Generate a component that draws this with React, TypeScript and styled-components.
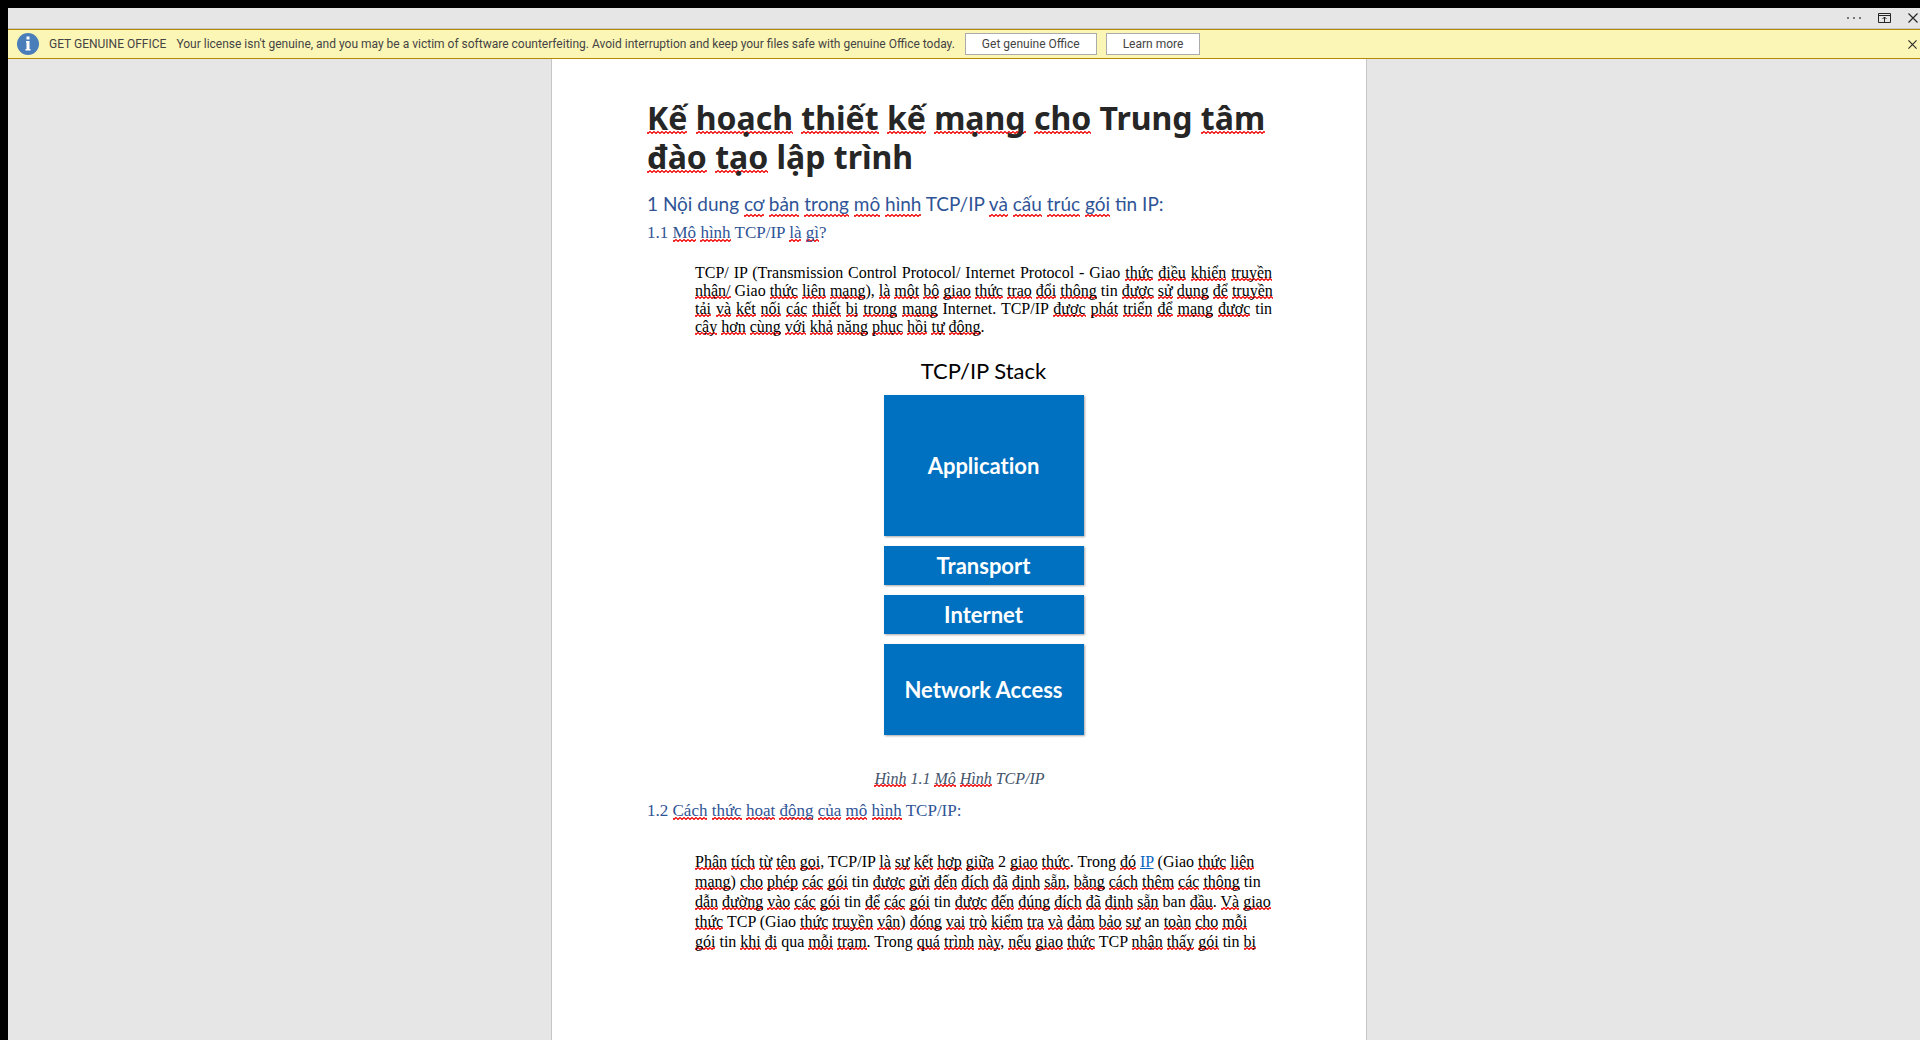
import React from "react";
import styled, { createGlobalStyle } from "styled-components";

const serif = '"Liberation Serif", "Times New Roman", serif';
const humanist = "Lato, Calibri, sans-serif";
const display = '"Noto Sans", Tahoma, sans-serif';
const ui = 'Roboto, "Segoe UI", sans-serif';

const squiggle =
  "url(\"data:image/svg+xml,%3Csvg xmlns='http://www.w3.org/2000/svg' width='4' height='3'%3E%3Cpath d='M-1 .5L1 2.5L3 .5L5 2.5' fill='none' stroke='%23f00000' stroke-width='1.2'/%3E%3C/svg%3E\")";

const GlobalStyle = createGlobalStyle`
  *, *::before, *::after { box-sizing: border-box; }
  body { margin: 0; background: #000; }
`;

const Window = styled.div`
  display: flex;
  flex-direction: column;
  height: 100vh;
  padding: 8px 0 0 8px;
  background: #000;
  overflow: hidden;
`;

const TitleBar = styled.header`
  display: flex;
  flex: none;
  align-items: center;
  justify-content: flex-end;
  gap: 17px;
  height: 21px;
  padding-right: 2px;
  background: #e6e6e6;
  border-bottom: 1px solid #c6c6c6;
`;

const IconButton = styled.button`
  display: flex;
  padding: 0;
  border: 0;
  background: none;
  color: #262626;
`;

const Banner = styled.section`
  display: flex;
  flex: none;
  align-items: center;
  gap: 10px;
  height: 30px;
  padding: 0 3px 0 9px;
  background: #fcf6b6;
  border: solid #b38a00;
  border-width: 1px 0;
  color: #444;
  font: 12px/20px ${ui};
  white-space: nowrap;
`;

const BannerLabel = styled.strong`
  font-weight: 400;
`;

const BannerActions = styled.div`
  display: flex;
  flex: 1;
  gap: 9px;
`;

const BannerButton = styled.button`
  height: 22px;
  padding: 0 16px;
  border: 1px solid #ababab;
  background: #fff;
  color: #444;
  font: inherit;
`;

const Workspace = styled.main`
  display: flex;
  flex: 1;
  justify-content: center;
  min-height: 0;
  padding-right: 10px;
  background: #e6e6e6;
`;

const Page = styled.article`
  width: 816px;
  padding: 39px 94px 0 95px;
  border: solid #c6c6c6;
  border-width: 0 1px;
  background: #fff;
  color: #000;
  font-family: ${serif};
`;

const Misspelled = styled.span`
  background: ${squiggle} left bottom / 4px 3px repeat-x;
`;

const Title = styled.h1`
  margin: 0;
  color: #262626;
  font: 700 32px/39px ${display};
  white-space: nowrap;

  ${Misspelled} {
    background-position: left bottom 5px;
  }
`;

const Heading = styled.h2`
  margin: 14px 0 1px;
  color: #2f5496;
  font: 400 19px/28px ${humanist};
  white-space: nowrap;

  ${Misspelled} {
    padding-bottom: 2px;
  }
`;

const Subheading = styled.h3`
  margin: 0;
  color: #2f5496;
  font: 400 17px/28px ${serif};
`;

const Body = styled.p<{ $justify?: boolean; $leading: number; $gap: number }>`
  margin: ${(p) => p.$gap}px 0 0 48px;
  font-size: 16px;
  line-height: ${(p) => p.$leading}px;
  white-space: nowrap;
  text-align-last: ${(p) => (p.$justify ? "justify" : "left")};
`;

const Line = styled.span`
  display: block;

  &:last-child {
    text-align-last: left;
  }
`;

const Link = styled.a`
  color: #0563c1;
`;

const Figure = styled.figure`
  margin: 21px 0 4px;
`;

const Stack = styled.div`
  display: flex;
  flex-direction: column;
  align-items: center;
  gap: 10px;
  margin-left: 48px;
`;

const StackTitle = styled.div`
  font: 400 22px/28px ${humanist};
`;

const Layer = styled.div<{ $height: number }>`
  display: flex;
  align-items: center;
  justify-content: center;
  width: 200px;
  height: ${(p) => p.$height}px;
  background: #0070c0;
  box-shadow: 1px 1px 2px rgba(0, 0, 0, 0.35);
  color: #fff;
  font: 700 22px/28px ${humanist};
  font-variant-ligatures: none;
`;

const Caption = styled.figcaption`
  margin-top: 30px;
  color: #44546a;
  font: italic 400 16px/28px ${serif};
  text-align: center;
`;

/* Words in square brackets are flagged by the spell checker; <IP> is a link. */
function Proofed({ text }: { text: string }) {
  return (
    <>
      {text.split(/(\[[^\]]+\]|<[^>]+>)/).map((part, i) => {
        if (part.startsWith("[")) return <Misspelled key={i}>{part.slice(1, -1)}</Misspelled>;
        if (part.startsWith("<")) return <Link key={i} href="#ip">{part.slice(1, -1)}</Link>;
        return part;
      })}
    </>
  );
}

const intro = [
  "TCP/ IP (Transmission Control Protocol/ Internet Protocol - Giao [thức] [điều] [khiển] [truyền]",
  "[nhận/] Giao [thức] [liên] [mạng]), [là] [một] [bộ] [giao] [thức] [trao] [đổi] [thông] tin [được] [sử] [dụng] [để] [truyền]",
  "[tải] [và] [kết] [nối] [các] [thiết] [bị] [trong] [mạng] Internet. TCP/IP [được] [phát] [triển] [để] [mạng] [được] tin",
  "[cậy] [hơn] [cùng] [với] [khả] [năng] [phục] [hồi] [tự] [động].",
];

const operation = [
  "[Phân] [tích] [từ] [tên] [gọi], TCP/IP [là] [sự] [kết] [hợp] [giữa] 2 [giao] [thức]. Trong [đó] <IP> (Giao [thức] [liên]",
  "[mạng]) [cho] [phép] [các] [gói] tin [được] [gửi] [đến] [đích] [đã] [định] [sẵn], [bằng] [cách] [thêm] [các] [thông] tin",
  "[dẫn] [đường] [vào] [các] [gói] tin [để] [các] [gói] tin [được] [đến] [đúng] [đích] [đã] [định] [sẵn] ban [đầu]. [Và] [giao]",
  "[thức] TCP (Giao [thức] [truyền] [vận]) [đóng] [vai] [trò] [kiểm] [tra] [và] [đảm] [bảo] [sự] an [toàn] [cho] [mỗi]",
  "[gói] tin [khi] [đi] qua [mỗi] [trạm]. Trong [quá] [trình] [này], [nếu] [giao] [thức] TCP [nhận] [thấy] [gói] tin [bị]",
];

const layers = [
  { name: "Application", height: 141 },
  { name: "Transport", height: 39 },
  { name: "Internet", height: 39 },
  { name: "Network Access", height: 91 },
];

function Lines({ lines }: { lines: string[] }) {
  return (
    <>
      {lines.map((line) => (
        <Line key={line}>
          <Proofed text={line} />
        </Line>
      ))}
    </>
  );
}

function CloseIcon({ size }: { size: number }) {
  return (
    <svg width={size} height={size} viewBox="0 0 10 10" fill="none" stroke="currentColor" strokeWidth="1.2">
      <path d="M.5.5l9 9M9.500.5l-9 9" />
    </svg>
  );
}

export default function App() {
  return (
    <Window>
      <GlobalStyle />
      <TitleBar>
        <IconButton aria-label="More options">
          <svg width="14" height="10" fill="#777">
            <path d="M0 4h2v2H0zM6 4h2v2H6zM12 4h2v2h-2z" />
          </svg>
        </IconButton>
        <IconButton aria-label="Ribbon display options">
          <svg width="13" height="10" fill="none" stroke="currentColor">
            <path d="M.5.5h12v9H.5zM.5 2.500h12M6.500 9V4M4.500 6l2-2 2 2" />
          </svg>
        </IconButton>
        <IconButton aria-label="Close">
          <CloseIcon size={10} />
        </IconButton>
      </TitleBar>
      <Banner>
        <svg width="22" height="22" viewBox="0 0 22 22">
          <circle cx="11" cy="11" r="11" fill="#4a7ebb" />
          <path d="M9.500 3.500h3v3h-3zM9 8h3.500v8h1v1.500H8.500V16h1V9.500H9z" fill="#fff" />
        </svg>
        <BannerLabel>GET GENUINE OFFICE</BannerLabel>
        <span>
          Your license isn't genuine, and you may be a victim of software counterfeiting. Avoid
          interruption and keep your files safe with genuine Office today.
        </span>
        <BannerActions>
          <BannerButton>Get genuine Office</BannerButton>
          <BannerButton>Learn more</BannerButton>
        </BannerActions>
        <IconButton aria-label="Dismiss message">
          <CloseIcon size={9} />
        </IconButton>
      </Banner>
      <Workspace>
        <Page lang="vi">
          <Title>
            <Proofed text="[Kế] [hoạch] [thiết] [kế] [mạng] [cho] Trung [tâm]" />
            <br />
            <Proofed text="[đào] [tạo] lập trình" />
          </Title>
          <Heading>
            <Proofed text="1 Nội dung [cơ] [bản] [trong] [mô] [hình] TCP/IP [và] [cấu] [trúc] [gói] tin IP:" />
          </Heading>
          <Subheading>
            <Proofed text="1.1 [Mô] [hình] TCP/IP [là] [gì]?" />
          </Subheading>
          <Body $justify $leading={18} $gap={17}>
            <Lines lines={intro} />
          </Body>
          <Figure>
            <Stack>
              <StackTitle>TCP/IP Stack</StackTitle>
              {layers.map((layer) => (
                <Layer key={layer.name} $height={layer.height}>
                  {layer.name}
                </Layer>
              ))}
            </Stack>
            <Caption>
              <Proofed text="[Hình] 1.1 [Mô] [Hình] TCP/IP" />
            </Caption>
          </Figure>
          <Subheading>
            <Proofed text="1.2 [Cách] [thức] [hoạt] [động] [của] [mô] [hình] TCP/IP:" />
          </Subheading>
          <Body $leading={20} $gap={27}>
            <Lines lines={operation} />
          </Body>
        </Page>
      </Workspace>
    </Window>
  );
}
